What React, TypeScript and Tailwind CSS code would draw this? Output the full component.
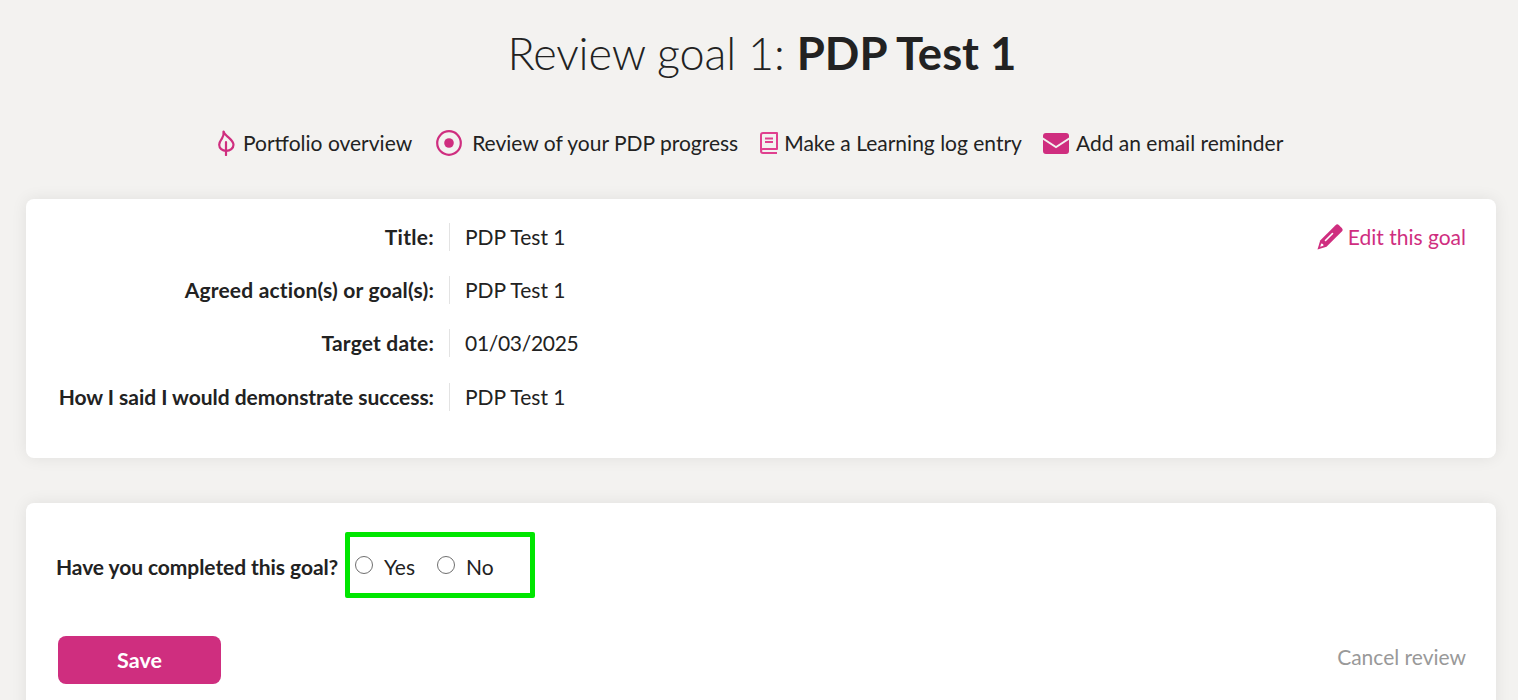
const rows = [
  { label: 'Title:', value: 'PDP Test 1', labelClass: 'tracking-[0.3px]' },
  { label: 'Agreed action(s) or goal(s):', value: 'PDP Test 1', labelClass: 'tracking-[0.18px]' },
  { label: 'Target date:', value: '01/03/2025', labelClass: 'tracking-[0.18px]', valueClass: 'tracking-[-0.3px]' },
  { label: 'How I said I would demonstrate success:', value: 'PDP Test 1', labelClass: 'tracking-[-0.03px]', rowClass: 'mt-[1px]' },
];

function LeafIcon() {
  return (
    <svg width="17" height="26" viewBox="0 0 17 26" fill="none" stroke="#cf2e7f" strokeWidth="2.200">
      <path d="M8 25V12" strokeLinecap="round" />
      <path d="M5.500 1.500c.5 2.500 2.500 3.600 5 5.800 2.500 2.200 5 4.700 5 7.500 0 3.400-3.300 6-7.300 6s-7-2.600-7-6c0-2.800 1.600-4.600 2.800-6.300 1.200-1.700 2-4 1.500-7z" strokeLinejoin="round" />
    </svg>
  );
}

function TargetIcon() {
  return (
    <svg width="26" height="26" viewBox="0 0 26 26">
      <circle cx="13" cy="13" r="11.800" fill="none" stroke="#cf2e7f" strokeWidth="2.200" />
      <circle cx="13" cy="13" r="4.800" fill="#cf2e7f" />
    </svg>
  );
}

function BookIcon() {
  return (
    <svg width="18" height="22" viewBox="0 0 18 22" fill="none" stroke="#e0408f" strokeWidth="2">
      <path d="M1 18V3a2 2 0 0 1 2-2h14v16H3a2 2 0 0 0-2 2 2 2 0 0 0 2 2h14" strokeLinejoin="round" />
      <path d="M5 6.500h8M5 10h8" />
    </svg>
  );
}

function MailIcon() {
  return (
    <svg width="26" height="21" viewBox="0 0 26 21">
      <path d="M3 0h20a3 3 0 0 1 3 3v1.500l-13 8.500L0 4.500V3a3 3 0 0 1 3-3z" fill="#cf2e7f" />
      <path d="M0 6.800l13 8.500 13-8.500V18a3 3 0 0 1-3 3H3a3 3 0 0 1-3-3z" fill="#cf2e7f" />
    </svg>
  );
}

function PencilIcon() {
  return (
    <svg width="26" height="26" viewBox="0 0 26 26">
      <path
        fill="#cf2e7f"
        d="M18.500 1.200a2.500 2.500 0 0 1 3.500 0l2.800 2.800a2.500 2.500 0 0 1 0 3.500L9.500 22.800 0.500 25.500 3.200 16.500z"
      />
      <path fill="none" stroke="#ffffff" strokeWidth="1.600" strokeLinecap="round" d="M8.500 16.500l7-7" />
      <path fill="#ffffff" d="M4.200 19.500l-1 3.300 3.300-1-0.400-1.900z" />
    </svg>
  );
}

function Radio({ label }: { label: string }) {
  return (
    <label className="flex items-center gap-[11px]">
      <span className="mb-[4px] box-border h-[18px] w-[18px] rounded-full border-[1.500px] border-[#6f6f6f] bg-white" />
      <span>{label}</span>
    </label>
  );
}

export default function App() {
  return (
    <div className="h-[700px] overflow-hidden bg-[#f3f2f0] font-['Lato','Liberation_Sans',sans-serif] text-[#222222]">
      <h1 className="pt-[22px] pl-[6px] text-center text-[45px] leading-[62px] font-light tracking-[-0.15px]">
        Review goal 1: <span className="text-[45.500px] font-bold tracking-normal">PDP Test 1</span>
      </h1>

      <nav className="mt-[43px] ml-[218px] flex h-[32px] items-center text-[21px]">
        <a className="flex items-center">
          <LeafIcon />
          <span className="ml-[8px]">Portfolio overview</span>
        </a>
        <a className="ml-[24px] flex items-center">
          <TargetIcon />
          <span className="ml-[10px]">Review of your PDP progress</span>
        </a>
        <a className="ml-[22px] flex items-center">
          <BookIcon />
          <span className="ml-[6px]">Make a Learning log entry</span>
        </a>
        <a className="ml-[21px] flex items-center">
          <MailIcon />
          <span className="ml-[7px]">Add an email reminder</span>
        </a>
      </nav>

      <section className="mt-[40px] ml-[26px] flex h-[259px] w-[1470px] items-start justify-between rounded-[8px] bg-white pt-[18px] pr-[30px] shadow-[0_0_16px_rgba(0,0,0,0.08)]">
        <div className="flex flex-col gap-[13px]">
          {rows.map((row) => (
            <div key={row.label} className={`flex h-[40px] items-center text-[21px] ${row.rowClass ?? ''}`}>
              <div className={`w-[408px] text-right font-bold ${row.labelClass}`}>{row.label}</div>
              <div className="ml-[15px] h-[28px] w-px bg-[#e3e3e3]" />
              <div className={`ml-[15px] ${row.valueClass ?? ''}`}>{row.value}</div>
            </div>
          ))}
        </div>
        <a className="flex h-[40px] items-center text-[21px] text-[#cf2e7f]">
          <PencilIcon />
          <span className="ml-[5px]">Edit this goal</span>
        </a>
      </section>

      <section className="mt-[45px] ml-[26px] h-[260px] w-[1470px] rounded-[8px] bg-white px-[30px] pt-[29px] shadow-[0_0_16px_rgba(0,0,0,0.08)]">
        <div className="flex items-center text-[21px]">
          <span className="w-[284px] pt-[4px] font-bold tracking-[-0.07px] whitespace-nowrap">Have you completed this goal?</span>
          <div className="ml-[5px] box-border flex h-[66px] w-[190px] items-center rounded-[2px] border-[5px] border-[#00e600] pt-[4px] pl-[5px]">
            <Radio label="Yes" />
            <div className="ml-[22px]">
              <Radio label="No" />
            </div>
          </div>
        </div>
        <div className="mt-[38px] flex items-center justify-between">
          <button className="ml-[2px] h-[48px] w-[163px] rounded-[8px] bg-[#cf2e7f] text-[21.500px] font-bold text-white">
            Save
          </button>
          <a className="pb-[6px] text-[21px] text-[#999999]">Cancel review</a>
        </div>
      </section>
    </div>
  );
}
